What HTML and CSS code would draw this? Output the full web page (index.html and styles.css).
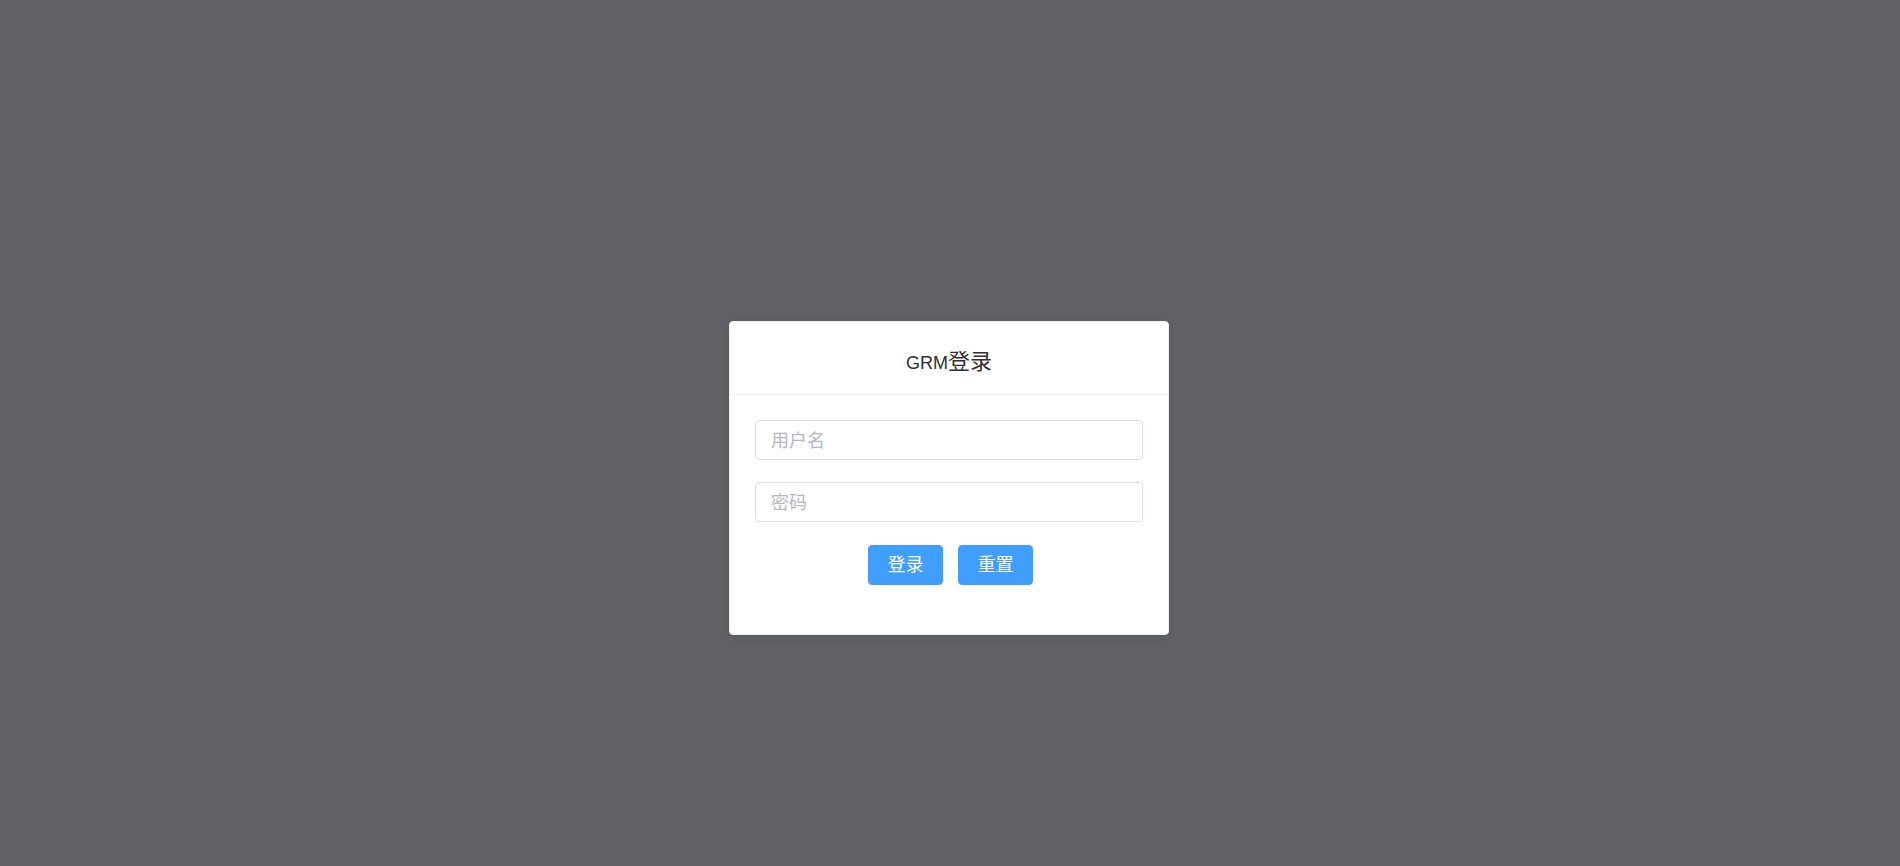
FILE: index.html
```html
<!DOCTYPE html>
<html lang="zh-CN">
<head>
<meta charset="utf-8">
<title>GRM登录</title>
<link rel="stylesheet" href="styles.css">
</head>
<body>
<div class="page">
  <div class="card">
    <div class="card-header">
      <span class="title"><span class="latin">GRM</span><span class="cjk">登录</span></span>
    </div>
    <div class="card-body">
      <form class="form">
        <div class="form-item">
          <input class="input" type="text" placeholder="用户名">
        </div>
        <div class="form-item">
          <input class="input" type="password" placeholder="密码">
        </div>
        <div class="form-item actions">
          <button type="button" class="btn">登录</button>
          <button type="button" class="btn">重置</button>
        </div>
      </form>
    </div>
  </div>
</div>
</body>
</html>
```

FILE: styles.css
```css
html, body {
  margin: 0;
  padding: 0;
  height: 100%;
}

body {
  background: #606266;
  font-family: "Liberation Sans", "Noto Sans CJK SC", sans-serif;
  color: #303133;
}

.page {
  display: flex;
  justify-content: center;
  align-items: flex-start;
  padding-top: 321px;
  padding-right: 2px;
}

.card {
  width: 440px;
  box-sizing: border-box;
  background: #ffffff;
  border: 1px solid #ebeef5;
  border-radius: 4px;
  box-shadow: 0 2px 12px 0 rgba(0, 0, 0, 0.1);
  overflow: hidden;
}

.card-header {
  height: 72px;
  border-bottom: 1px solid #ebeef5;
  display: flex;
  align-items: center;
  justify-content: center;
}

.title {
  color: #303133;
  line-height: 1;
  display: flex;
  align-items: baseline;
  margin-top: 3px;
}

.title .latin {
  font-family: "Liberation Sans", sans-serif;
  font-size: 18px;
}

.title .cjk {
  font-family: "Noto Sans CJK SC", sans-serif;
  font-size: 22px;
}

.card-body {
  padding: 25px 25px 27px;
}

.form {
  margin: 0;
}

.form-item {
  margin-bottom: 22px;
}

.input {
  display: block;
  width: 100%;
  height: 40px;
  box-sizing: border-box;
  border: 1px solid #dcdfe6;
  border-radius: 4px;
  padding: 0 15px 3px;
  font-family: "Noto Sans CJK SC", sans-serif;
  font-size: 18px;
  color: #606266;
  background: #ffffff;
  outline: none;
}

.input::placeholder {
  color: #b4b8c0;
}

.actions {
  display: flex;
  justify-content: center;
  gap: 15px;
  padding-left: 3px;
  padding-top: 1px;
}

.btn {
  width: 75px;
  height: 40px;
  box-sizing: border-box;
  border: 1px solid #409eff;
  border-radius: 4px;
  background: #409eff;
  color: #ffffff;
  font-family: "Noto Sans CJK SC", sans-serif;
  font-size: 18px;
  line-height: 1;
  padding: 0 0 4px;
  cursor: pointer;
}
```
